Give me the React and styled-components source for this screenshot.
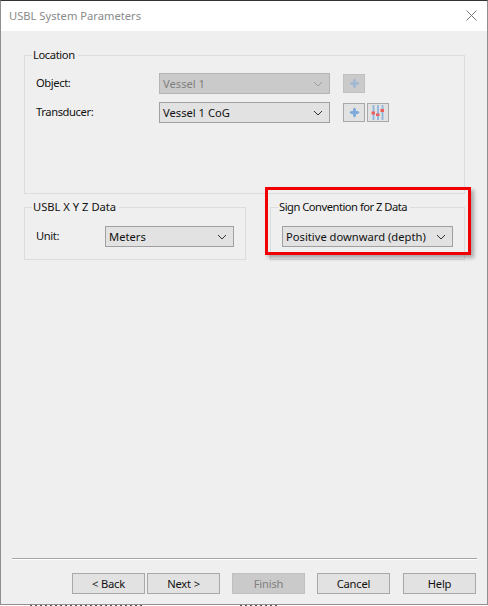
import React from "react";
import styled, { createGlobalStyle } from "styled-components";

const GlobalStyle = createGlobalStyle`
  html, body {
    margin: 0;
    background: #fff;
  }
  body {
    font-family: "Noto Sans", "Liberation Sans", Arial, sans-serif;
    font-size: 11.2px;
    color: #111;
  }
`;

const Screen = styled.div`
  width: 488px;
  height: 606px;
  overflow: hidden;
  position: relative;
`;

const Window = styled.div`
  box-sizing: border-box;
  width: 488px;
  height: 605px;
  display: flex;
  flex-direction: column;
  background: #efefef;
  border-top: 1px solid #333;
  border-left: 1px solid #8f8f8f;
  border-right: 1px solid #8f8f8f;
  border-bottom: 1px solid #8f8f8f;
`;

const TitleBar = styled.div`
  height: 30px;
  flex: none;
  display: flex;
  align-items: center;
  justify-content: space-between;
  padding: 0 10px 2px 8px;
  box-sizing: border-box;
  background: #fff;
  color: #8a8a8a;
`;

const Body = styled.div`
  flex: 1;
  display: flex;
  flex-direction: column;
  padding: 17px 10px 10px 11px;
`;

const Content = styled.div`
  flex: 1;
  display: flex;
  flex-direction: column;
  gap: 6px;
  padding: 0 10px 0 12px;
`;

const Group = styled.fieldset`
  box-sizing: border-box;
  margin: 0;
  padding: 0;
  min-width: 0;
  width: ${(p) => p.$width}px;
  height: ${(p) => p.$height}px;
  border: 1px solid #dcdcdc;
  position: relative;
`;

const Legend = styled.legend`
  padding: 0 3px 0 1px;
  margin-left: 7px;
  font-size: 11.2px;
  line-height: 14px;
  letter-spacing: ${(p) => p.$tracking || 0}px;
`;

const Rows = styled.div`
  display: flex;
  flex-direction: column;
  gap: 8px;
  padding: 11px 0 0 11px;
`;

const Row = styled.div`
  display: flex;
  align-items: center;
  height: 21px;
`;

const Label = styled.div`
  width: ${(p) => p.$width}px;
  flex: none;
  padding-bottom: 2px;
  letter-spacing: -0.4px;
`;

const Select = styled.div`
  box-sizing: border-box;
  width: ${(p) => p.$width}px;
  height: 21px;
  flex: none;
  display: flex;
  align-items: center;
  justify-content: space-between;
  padding: 0 6px 0 3px;
  border: 1px solid ${(p) => (p.$disabled ? "#b4b4b4" : "#a0a0a0")};
  background: ${(p) => (p.$disabled ? "#cacaca" : "#e2e2e2")};
  color: ${(p) => (p.$disabled ? "#808080" : "#111")};
`;

const Tools = styled.div`
  display: flex;
  gap: 2px;
  margin-left: 13px;
`;

const ToolButton = styled.div`
  box-sizing: border-box;
  width: 22px;
  height: 19px;
  display: flex;
  align-items: center;
  justify-content: center;
  border: 1px solid ${(p) => (p.$disabled ? "#c0c0c0" : "#a8a8a8")};
  background: ${(p) => (p.$disabled ? "#cacaca" : "#e2e2e2")};
`;

const BottomGroups = styled.div`
  display: flex;
  gap: 24px;
`;

const SingleRow = styled(Row)`
  margin: 12px 0 0 ${(p) => p.$left}px;
`;

const Separator = styled.div`
  height: 2px;
  flex: none;
  background: linear-gradient(#a5a5a5 50%, #fff 50%);
`;

const Footer = styled.div`
  display: flex;
  justify-content: flex-end;
  margin: 13px 1px 0 0;
`;

const Button = styled.div`
  box-sizing: border-box;
  width: 73px;
  height: 21px;
  display: flex;
  align-items: center;
  justify-content: center;
  margin-left: ${(p) => p.$gap}px;
  letter-spacing: -0.2px;
  border: 1px solid ${(p) => (p.$disabled ? "#c0c0c0" : "#a8a8a8")};
  background: ${(p) => (p.$disabled ? "#cacaca" : "#e2e2e2")};
  color: ${(p) => (p.$disabled ? "#808080" : "#111")};
`;

const Highlight = styled.div`
  position: absolute;
  left: 265px;
  top: 187px;
  width: 206px;
  height: 68px;
  box-sizing: border-box;
  border: 3px solid #f00000;
  box-shadow: 3px 3px 4px rgba(0, 0, 0, 0.3);
  pointer-events: none;
`;

// the clipped tops of the text behind the dialog, along the bottom edge
const BehindStrip = styled.div`
  height: 1px;
  display: flex;
  padding-left: 30px;
`;

const BehindText = styled.div`
  width: ${(p) => p.$width}px;
  margin-right: ${(p) => p.$gap || 0}px;
  background: repeating-linear-gradient(90deg, #555 0 2px, #fff 2px 5px);
`;

const Chevron = ({ color = "#333" }) => (
  <svg width="10" height="6" viewBox="0 0 10 6" fill="none">
    <path d="M1 1l4 4 4-4" stroke={color} strokeWidth="1" />
  </svg>
);

const CloseIcon = () => (
  <svg width="11" height="11" viewBox="0 0 11 11" fill="none">
    <path d="M.5.5l10 10M10.5.5l-10 10" stroke="#777" strokeWidth="1" />
  </svg>
);

const MoveIcon = ({ faded }) => (
  <svg width="11" height="11" viewBox="0 0 11 11" opacity={faded ? 0.5 : 1}>
    <path d="M4 4V2L5.5.5 7 2v2h2l1.5 1.5L9 7H7v2L5.5 10.5 4 9V7H2L.5 5.5 2 4z" fill="#7fabdc" />
  </svg>
);

const SlidersIcon = () => (
  <svg width="14" height="15" viewBox="0 0 14 15" fill="none">
    <path d="M2.5 0v15M7 0v15M11.5 0v15" stroke="#8db4de" strokeWidth="1.8" />
    <rect x="0.5" y="6.5" width="3.5" height="3" fill="#ee5f5c" />
    <rect x="5" y="8.5" width="3.5" height="2.5" fill="#ee5f5c" />
    <rect x="9.5" y="4" width="3.5" height="3" fill="#ee5f5c" />
  </svg>
);

const App = () => (
  <Screen>
    <GlobalStyle />
    <Window>
      <TitleBar>
        <span>USBL System Parameters</span>
        <CloseIcon />
      </TitleBar>
      <Body>
        <Content>
          <Group $width={441} $height={146}>
            <Legend $tracking={-0.4}>Location</Legend>
            <Rows>
              <Row>
                <Label $width={123}>Object:</Label>
                <Select $width={171} $disabled>
                  Vessel 1
                  <Chevron color="#a0a0a0" />
                </Select>
                <Tools>
                  <ToolButton $disabled>
                    <MoveIcon faded />
                  </ToolButton>
                </Tools>
              </Row>
              <Row>
                <Label $width={123}>Transducer:</Label>
                <Select $width={171}>
                  Vessel 1 CoG
                  <Chevron />
                </Select>
                <Tools>
                  <ToolButton>
                    <MoveIcon />
                  </ToolButton>
                  <ToolButton>
                    <SlidersIcon />
                  </ToolButton>
                </Tools>
              </Row>
            </Rows>
          </Group>
          <BottomGroups>
            <Group $width={222} $height={60}>
              <Legend>USBL X Y Z Data</Legend>
              <SingleRow $left={11}>
                <Label $width={69}>Unit:</Label>
                <Select $width={129}>
                  Meters
                  <Chevron />
                </Select>
              </SingleRow>
            </Group>
            <Group $width={195} $height={60}>
              <Legend $tracking={-0.5}>Sign Convention for Z Data</Legend>
              <SingleRow $left={11}>
                <Select $width={171}>
                  Positive downward (depth)
                  <Chevron />
                </Select>
              </SingleRow>
            </Group>
          </BottomGroups>
        </Content>
        <Separator />
        <Footer>
          <Button>&lt; Back</Button>
          <Button $gap={2}>Next &gt;</Button>
          <Button $gap={12} $disabled>
            Finish
          </Button>
          <Button $gap={12}>Cancel</Button>
          <Button $gap={13}>Help</Button>
        </Footer>
      </Body>
    </Window>
    <BehindStrip>
      <BehindText $width={115} $gap={95} />
      <BehindText $width={40} />
    </BehindStrip>
    <Highlight />
  </Screen>
);

export default App;
